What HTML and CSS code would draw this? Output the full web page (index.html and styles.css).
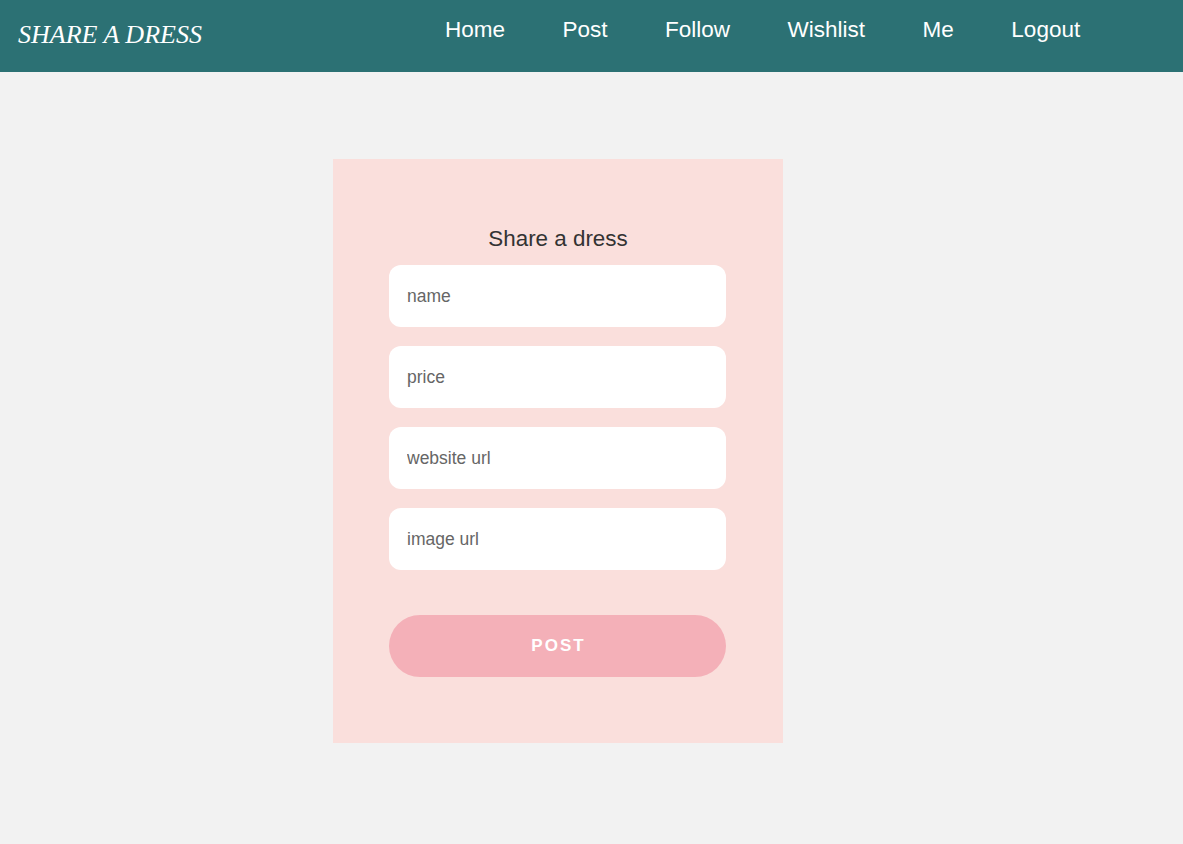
FILE: index.html
```html
<!DOCTYPE html>
<html lang="en">
<head>
<meta charset="utf-8">
<title>Share a dress</title>
<link rel="stylesheet" href="styles.css">
</head>
<body>
<header class="navbar">
  <div class="logo">SHARE A DRESS</div>
  <nav class="nav">
    <a class="nav-link" href="#">Home</a>
    <a class="nav-link" href="#">Post</a>
    <a class="nav-link" href="#">Follow</a>
    <a class="nav-link" href="#">Wishlist</a>
    <a class="nav-link" href="#">Me</a>
    <a class="nav-link" href="#">Logout</a>
  </nav>
</header>
<main class="main">
  <form class="card">
    <h2 class="card-title">Share a dress</h2>
    <input class="field" type="text" placeholder="name">
    <input class="field" type="text" placeholder="price">
    <input class="field" type="text" placeholder="website url">
    <input class="field" type="text" placeholder="image url">
    <button class="post-btn" type="button">POST</button>
  </form>
</main>
</body>
</html>
```
FILE: styles.css
```css
* { box-sizing: border-box; }
html, body { margin: 0; padding: 0; }
body {
  background: #f2f2f2;
  font-family: "Liberation Sans", Arial, sans-serif;
  min-height: 844px;
}
.navbar {
  height: 72px;
  background: #2c7174;
  display: flex;
  align-items: flex-start;
}
.logo {
  font-family: "Liberation Serif", "Times New Roman", serif;
  font-style: italic;
  font-size: 26px;
  line-height: 29px;
  color: #fff;
  padding: 20px 0 0 18px;
  width: 445px;
  white-space: nowrap;
}
.nav {
  display: flex;
  gap: 57.5px;
  padding-top: 17px;
}
.nav-link {
  color: #fff;
  text-decoration: none;
  font-size: 22.5px;
  line-height: 26px;
}
.main {
  padding: 87px 0 0 333px;
}
.card {
  width: 450px;
  height: 584px;
  background: #fadfdc;
  padding: 67px 56px 0 56px;
  display: flex;
  flex-direction: column;
  gap: 19px;
  margin: 0;
}
.card-title {
  margin: 0 0 -5px 0;
  font-weight: normal;
  font-size: 22.4px;
  line-height: 25px;
  color: #333;
  text-align: center;
}
.field {
  width: 337px;
  height: 62px;
  border: none;
  border-radius: 12px;
  background: #fff;
  padding: 0 18px;
  font-family: "Liberation Sans", Arial, sans-serif;
  font-size: 17.5px;
  color: #333;
  outline: none;
}
.field::placeholder { color: #666; }
.post-btn {
  margin-top: 26px;
  width: 337px;
  height: 62px;
  border: none;
  border-radius: 31px;
  background: #f4b0b8;
  color: #fff;
  font-family: "Liberation Sans", Arial, sans-serif;
  font-weight: bold;
  font-size: 17px;
  letter-spacing: 2px;
  padding: 0 0 0 2px;
}
```
